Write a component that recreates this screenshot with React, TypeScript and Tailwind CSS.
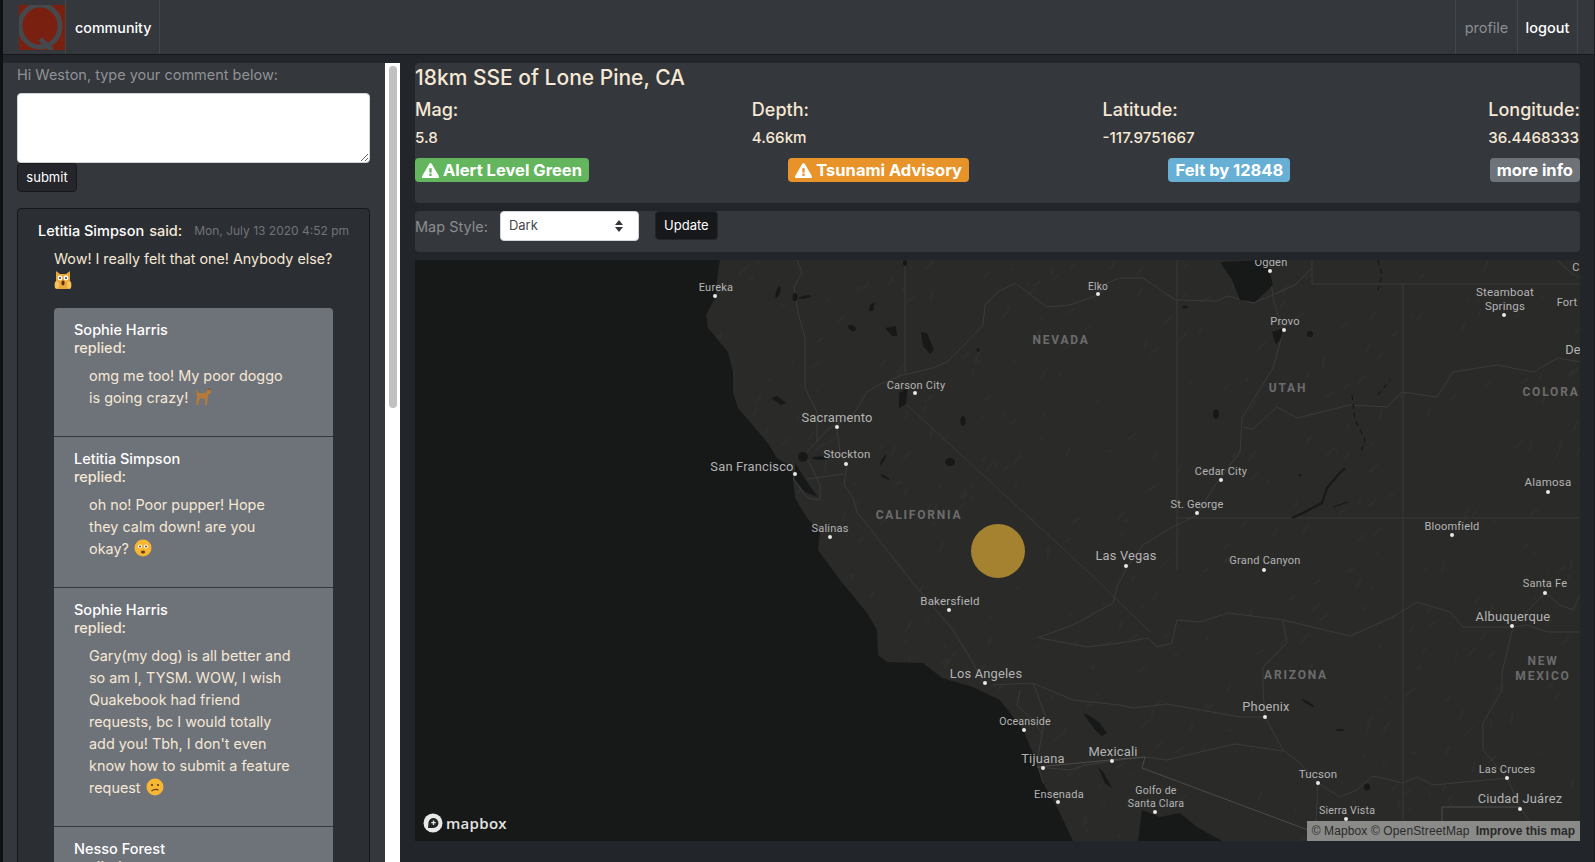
import React from "react";
import { FaExclamationTriangle } from "react-icons/fa";

const coast: [number, number][] = [[720,260],[718,272],[715,298],[706,315],[708,328],[728,352],[733,372],[733,392],[738,408],[767,442],[777,458],[792,468],[795,498],[807,518],[820,532],[818,550],[840,580],[867,613],[877,630],[878,655],[887,662],[923,663],[942,678],[973,687],[1000,700],[1023,730],[1037,763],[1043,783],[1057,807],[1073,841],[415,841],[415,260]];
const gulf = "1138,841 1142,810 1160,817 1180,813 1197,827 1222,841";

const roads = [
  "797,260 802,272 794,287 798,312 805,338 805,388 817,412 817,442",
  "807,452 827,430 853,415 867,392 880,384 903,375 933,368 947,362 967,342 983,325 985,305 998,292 1015,283 1047,307 1070,305 1098,295 1107,283 1120,278 1143,278 1175,300 1217,301 1228,296 1253,303 1273,295",
  "837,430 840,452 847,465 844,485 853,498 857,512 887,550 913,583 953,630 973,663 983,683",
  "793,478 807,498 820,500 820,485 807,458",
  "807,479 844,474",
  "1037,638 1073,625 1113,603 1117,587 1127,567 1143,545 1167,530 1197,515 1213,488 1240,452 1242,418 1273,368 1283,332 1273,298 1270,272",
  "1243,427 1253,429 1277,407 1297,418 1350,405 1387,407 1402,392 1437,397 1453,372 1497,365 1533,372 1558,358 1580,362",
  "1040,638 1087,647 1120,643 1148,638 1157,647 1172,643 1177,620 1200,622 1228,613 1283,620 1350,636 1393,617 1417,602 1450,612 1463,627 1513,627 1527,625 1547,632 1580,632",
  "993,685 1033,683 1073,700 1120,705 1133,708 1167,704 1240,717 1265,717 1283,750 1300,763 1318,783 1340,797 1357,790 1373,776 1403,783 1417,777 1433,785 1507,778 1520,807 1535,830 1560,841",
  "1037,767 1070,770 1085,765 1112,761 1145,757 1167,760 1200,752 1235,744 1283,751",
  "1283,620 1287,643 1263,667 1263,690 1265,717",
  "1513,627 1502,673 1502,690 1483,723 1483,750 1507,778",
  "1512,627 1545,593 1560,605 1573,610 1580,595",
  "1318,783 1315,841",
  "1020,690 1017,705 1033,720 1043,735",
  "1033,683 1045,715 1037,763",
  "1043,783 1037,763",
  "1557,260 1570,272 1580,278",
  "1312,268 1295,285 1273,295",
];
const borders = [
  "905,260 905,373",
  "907,405 1070,555 1100,583 1150,632",
  "1177,260 1177,570",
  "1177,518 1580,518",
  "1403,284 1403,841",
  "1312,260 1312,284 1580,284",
];
const mexico = ["1142,768 1308,830", "1037,767 1120,759 1145,757 1142,768", "1442,841 1442,807 1520,807"];
const lakeShapes = [
  "1220,262 1267,260 1273,285 1255,302 1240,300 1232,280",
  "795,463 807,482 818,497 805,492 795,480",
  "899,393 908,388 906,404 899,408",
  "921,332 927,333 934,350 930,354 923,346",
  "885,328 896,326 897,336 892,336",
  "870,305 875,302 873,311 869,311",
  "1083,713 1090,716 1099,722 1107,733 1102,736 1095,730",
  "1098,767 1103,772 1112,788 1105,783",
  "1272,332 1284,328 1281,338 1276,345",
  "771,398 777,396 786,403 781,405",
];
const ovals: [number, number, number, number, number][] = [
  [852,328,4,2.5,30],[778,292,2,6,20],[795,297,2.5,4,0],[805,297,6,1.5,-10],
  [950,462,5,4,0],[963,421,2.5,5,0],[885,477,5,1.2,30],[883,460,1.2,6,30],[803,457,5,5,0],[820,458,8,1.8,0],[1310,334,3,3,0],[1216,414,3,5,0],
  [1367,787,3,3.5,0],[1308,703,7,1.2,30],[1340,730,4,1,0],[1185,307,3,1.3,0],[905,263,2,3,0],[978,350,1.5,2,0],[1300,475,1.5,1,0],
];
const powell = ["1345,468 1338,475 1327,488 1322,503 1303,513 1292,518", "1333,507 1348,502"];
const dashes = ["1352,395 1355,420 1365,440 1360,455", "1378,260 1382,275 1378,290", "1378,395 1390,380"];

type L = [string, number, number, number?, number?, number?];
const labels: L[] = [
  ["Eureka",716,291,12,715,296],["Elko",1098,290,11,1098,294],["Carson City",916,389,12,915,393],["Sacramento",837,422,14,837,427],
  ["Stockton",847,458,12.5,846,464],["San Francisco",752,471,14,795,474],["Salinas",830,532,12,830,537],["Ogden",1271,266,12,1270,271],
  ["Provo",1285,325,12,1284,330],["Steamboat",1505,296,12.5],["Springs",1505,310,12.5,1504,315],["Cedar City",1221,475,12,1221,480],
  ["St. George",1197,508,12,1197,513],["Alamosa",1548,486,12.5,1548,492],["Bloomfield",1452,530,12,1452,535],["Las Vegas",1126,560,14,1126,566],
  ["Grand Canyon",1265,564,12,1264,570],["Santa Fe",1545,587,12,1545,593],["Albuquerque",1513,621,14,1512,626],["Phoenix",1266,711,14,1265,717],
  ["Mexicali",1113,756,14,1112,761],["Tucson",1318,778,12.5,1318,783],["Golfo de",1156,794,11.5],["Santa Clara",1156,807,11.5,1155,812],
  ["Sierra Vista",1347,814,11.5,1346,819],["Las Cruces",1507,773,12,1507,778],["Ciudad Juárez",1520,803,14,1520,809],["Bakersfield",950,605,12.5,949,610],
  ["Los Angeles",986,678,14,985,683],["Oceanside",1025,725,11.5,1024,730],["Tijuana",1043,763,14,1043,768],["Ensenada",1059,798,12,1058,802],
  ["Fort",1567,306,12],["C",1576,271,12],["De",1573,354,14],
];
const states: [string, number, number][] = [["NEVADA",1061,344],["CALIFORNIA",919,519],["UTAH",1288,392],["COLORA",1551,396],["ARIZONA",1296,679],["NEW",1543,665],["MEXICO",1543,680]];

function patches() {
  let s = 42;
  const r = () => (s = (s * 16807) % 2147483647) / 2147483647;
  return Array.from({ length: 420 }, () => ({
    x: 720 + r() * 860,
    y: 260 + r() * 580,
    l: 2 + r() * 6,
    a: -30 - r() * 50,
  }));
}
const patchData = patches();

function MapSvg() {
  return (
    <svg viewBox="415 260 1165 581" className="block h-full w-full" preserveAspectRatio="none">
      <rect x="415" y="260" width="1165" height="581" fill="#2a2a29" />
      {patchData.map((p, i) => (
        <ellipse key={i} cx={p.x} cy={p.y} rx={p.l} ry={1.5} fill="#2e2e2d" transform={`rotate(${p.a} ${p.x} ${p.y})`} />
      ))}
      <polygon points={coast.map((p) => p.join(",")).join(" ")} fill="#171919" />
      <polygon points={gulf} fill="#171919" />
      {borders.map((p, i) => <polyline key={i} points={p} fill="none" stroke="#393938" strokeWidth="1" />)}
      {roads.map((p, i) => <polyline key={i} points={p} fill="none" stroke="#3b3b3b" strokeWidth="1" strokeLinejoin="round" />)}
      {mexico.map((p, i) => <polyline key={i} points={p} fill="none" stroke="#4c4c4c" strokeWidth="1" />)}
      {lakeShapes.map((p, i) => <polygon key={i} points={p} fill="#171919" />)}
      {ovals.map(([x, y, rx, ry, a], i) => <ellipse key={i} cx={x} cy={y} rx={rx} ry={ry} fill="#171919" transform={`rotate(${a} ${x} ${y})`} />)}
      {powell.map((p, i) => <polyline key={i} points={p} fill="none" stroke="#171919" strokeWidth={i === 0 ? 2 : 1} />)}
      {dashes.map((p, i) => <polyline key={i} points={p} fill="none" stroke="#171919" strokeWidth="1.2" strokeDasharray="5 4" />)}
      <circle cx="998" cy="551" r="27" fill="#a5822f" />
      {labels.map(([t, x, y, size, dx, dy]) => (
        <g key={t + x}>
          <text x={x} y={y} textAnchor="middle" fontSize={(size ?? 12) * 0.92} fill="#b4b4b4" fontFamily="Roboto, sans-serif" letterSpacing="0.2">{t}</text>
          {dx !== undefined && <circle cx={dx} cy={dy} r="2" fill="#e8e8e8" />}
        </g>
      ))}
      {states.map(([t, x, y]) => (
        <text key={t} x={x} y={y} textAnchor="middle" fontSize="12" fontWeight="700" fill="#6c6c6c" fontFamily="Roboto, sans-serif" letterSpacing="1.8">{t}</text>
      ))}
    </svg>
  );
}

const Emoji = ({ kind }: { kind: "cat" | "dog" | "dizzy" | "confused" }) => {
  if (kind === "dog")
    return (
      <svg width="20" height="20" viewBox="0 0 20 20" className="ml-[1px] inline-block align-[-4px]">
        <path d="M3 2 L5 7 L12 8 L15 6 L18 3 L17 1 L14 3 L13 6 L6 6 Z" fill="#8a5a2c" />
        <path d="M14 3 L18 3 L18 6 L15 8 L14 18 L12 18 L12 12 L7 11 L5 18 L3 18 L4 9 L3 2 L6 6 L13 6 Z" fill="#b47a3c" />
      </svg>
    );
  if (kind === "cat")
    return (
      <svg width="18" height="20" viewBox="0 0 18 20" className="block">
        <path d="M2 1 L6 4 L12 4 L16 1 L16 12 L14 19 L4 19 L2 12 Z" fill="#e9a93a" />
        <circle cx="6" cy="8" r="2.4" fill="#fff" /><circle cx="12" cy="8" r="2.4" fill="#fff" />
        <circle cx="6" cy="8" r="1" fill="#333" /><circle cx="12" cy="8" r="1" fill="#333" />
        <ellipse cx="9" cy="13" rx="1.6" ry="2.4" fill="#5a2a12" />
        <ellipse cx="2.8" cy="15" rx="2.2" ry="4" fill="#f4c55c" /><ellipse cx="15.2" cy="15" rx="2.2" ry="4" fill="#f4c55c" />
      </svg>
    );
  return (
    <svg width="18" height="18" viewBox="0 0 18 18" className="ml-[1px] inline-block align-[-3px]">
      <circle cx="9" cy="9" r="8.5" fill="#f7b733" />
      {kind === "dizzy" ? (
        <>
          <circle cx="6" cy="7.5" r="2" fill="#fff" /><circle cx="12" cy="7.5" r="2" fill="#fff" />
          <circle cx="6" cy="7.5" r="0.9" fill="#5a3a12" /><circle cx="12" cy="7.5" r="0.9" fill="#5a3a12" />
          <ellipse cx="9" cy="13" rx="2.2" ry="1.5" fill="#6b3a14" />
        </>
      ) : (
        <>
          <circle cx="6" cy="7" r="1.1" fill="#5a3a12" /><circle cx="12" cy="7" r="1.1" fill="#5a3a12" />
          <path d="M5.5 13 Q9 10.5 12.5 12" stroke="#5a3a12" strokeWidth="1.2" fill="none" />
        </>
      )}
    </svg>
  );
};

const Reply = ({ name, children, first, last }: { name: string; children: React.ReactNode; first?: boolean; last?: boolean }) => (
  <div className={`bg-[#6e7279] px-[20px] pt-[13px] pb-[27px] ${first ? "rounded-t-[4px]" : ""} ${last ? "" : "border-b border-[#34373c]"}`}>
    <div className="text-[14.5px] leading-[18px] font-medium text-white">{name}</div>
    <div className="text-[14.5px] leading-[18px] font-medium text-[#f5e8d5]">replied:</div>
    <p className="mt-[8px] pl-[15px] text-[14.4px] leading-[22px] text-[#f5e8d5]">{children}</p>
  </div>
);

const Badge = ({ className, children }: { className: string; children: React.ReactNode }) => (
  <span className={`flex h-[24px] items-center gap-[4px] rounded-[4px] px-[7px] text-[16.5px] leading-none font-bold text-white ${className}`}>{children}</span>
);

const Stat = ({ label, value }: { label: string; value: string }) => (
  <div className="flex flex-col">
    <span className="text-[18px] leading-[24px] font-medium">{label}</span>
    <span className="mt-[5px] text-[15.2px] leading-[22px] font-medium">{value}</span>
  </div>
);

export default function App() {
  return (
    <div className="flex h-screen w-full flex-col overflow-hidden border-r border-l-[3px] border-r-[#1a1c1f] border-l-[#0f1012] bg-[#22252a] font-['Inter',sans-serif] text-[#f5e8d5]">
      <nav className="flex h-[55px] shrink-0 items-stretch border-b border-[#17181b] bg-[#34373c] pl-[16px]">
        <div className="flex w-[47px] items-center border-r border-[#44474c]">
          <svg width="46" height="45" viewBox="0 0 46 45" className="block">
            <rect width="46" height="45" fill="#7a2010" />
            <ellipse cx="21" cy="21" rx="20" ry="21" fill="none" stroke="#45484c" strokeWidth="5" />
            <line x1="21" y1="34" x2="33" y2="45" stroke="#45484c" strokeWidth="5" />
          </svg>
        </div>
        <div className="flex w-[94px] items-center border-r border-[#44474c] pt-[2px] pl-[9px] text-[14.3px] font-medium text-white">community</div>
        <div className="ml-auto flex items-stretch border-l border-[#44474c]">
          <div className="flex w-[62px] items-center justify-center border-r border-[#44474c] pt-[2px] text-[14.5px] text-[#8b8d90]">profile</div>
          <div className="flex w-[60px] items-center justify-center border-r border-[#44474c] pt-[2px] text-[14.5px] font-medium text-white">logout</div>
          <div className="w-[16px]" />
        </div>
      </nav>

      <main className="flex min-h-0 flex-1 pt-[8px]">
        <aside className="w-[382px] shrink-0 overflow-hidden bg-[#34373c] pr-[15px] pl-[14px]">
          <div className="text-[14.5px] leading-[24px] text-[#909295]">Hi Weston, type your comment below:</div>
          <textarea aria-label="comment" className="mt-[6px] block h-[70px] w-full rounded-[4px] border border-[#ced4da] bg-white" />
          <button className="block h-[29px] w-[60px] rounded-[4px] border border-[#17181b] bg-[#24262b] text-[13px] text-white">submit</button>
          <section className="mt-[16px] rounded-[4px] border border-[#17181b] bg-[#2b2e33] px-[36px] pt-[10px]">
            <div className="-ml-[16px] flex items-center text-[14.5px] leading-[24px] font-medium whitespace-nowrap">
              <span className="text-white">Letitia Simpson</span>
              <span className="ml-[5px]">said:</span>
              <span className="ml-[12px] text-[12px] font-normal text-[#71747a]">Mon, July 13 2020 4:52 pm</span>
            </div>
            <div className="mt-[5px] text-[14.3px] leading-[22px]">
              <div className="whitespace-nowrap">Wow! I really felt that one! Anybody else?</div>
              <Emoji kind="cat" />
            </div>
            <div className="mt-[18px]">
              <Reply name="Sophie Harris" first>omg me too! My poor doggo<br />is going crazy! <Emoji kind="dog" /></Reply>
              <Reply name="Letitia Simpson">oh no! Poor pupper! Hope<br />they calm down! are you<br />okay? <Emoji kind="dizzy" /></Reply>
              <Reply name="Sophie Harris">Gary(my dog) is all better and<br />so am I, TYSM. WOW, I wish<br />Quakebook had friend<br />requests, bc I would totally<br />add you! Tbh, I don't even<br />know how to submit a feature<br />request <Emoji kind="confused" /></Reply>
              <Reply name="Nesso Forest" last>Same here!</Reply>
            </div>
          </section>
        </aside>
        <div className="w-[15px] shrink-0 bg-white pt-[3px] pl-[4px]">
          <div className="h-[342px] w-[8px] rounded-[4px] bg-[#c0c0c0]" />
        </div>

        <div className="flex min-w-0 flex-1 flex-col gap-[8px] pr-[14px] pb-[21px] pl-[15px]">
          <section className="h-[140px] shrink-0 rounded-[4px] bg-[#34373c]">
            <h1 className="h-[29px] text-[21px] leading-[30px] font-medium">18km SSE of Lone Pine, CA</h1>
            <div className="flex justify-between pt-[6px]">
              <Stat label="Mag:" value="5.8" />
              <Stat label="Depth:" value="4.66km" />
              <Stat label="Latitude:" value="-117.9751667" />
              <Stat label="Longitude:" value="36.4468333" />
            </div>
            <div className="mt-[9px] flex justify-between">
              <Badge className="bg-[#63b65d]"><FaExclamationTriangle size={17} />Alert Level Green</Badge>
              <Badge className="bg-[#e89329]"><FaExclamationTriangle size={17} />Tsunami Advisory</Badge>
              <Badge className="bg-[#67afd5]">Felt by 12848</Badge>
              <Badge className="bg-[#6e7279]">more info</Badge>
            </div>
          </section>

          <section className="flex h-[41px] shrink-0 items-start rounded-[4px] bg-[#34373c]">
            <span className="mt-[5px] text-[14.5px] leading-[22px] text-[#8b8d90]">Map Style:</span>
            <div className="ml-[12px] flex h-[30px] w-[139px] items-center justify-between rounded-[4px] border border-[#ced4da] bg-white pr-[15px] pl-[8px] text-[13px] text-[#44474c]">
              Dark
              <svg width="8" height="12" viewBox="0 0 8 12"><path d="M4 0 L8 5 L0 5 Z M4 12 L8 7 L0 7 Z" fill="#34373c" /></svg>
            </div>
            <button className="ml-[16px] h-[29px] w-[63px] rounded-[4px] border border-[#22252a] bg-[#17181b] text-[13px] text-white">Update</button>
          </section>

          <section className="relative min-h-0 flex-1 overflow-hidden">
            <MapSvg />
            <div className="absolute bottom-[8px] left-[8px] flex items-center gap-[3px]">
              <svg width="20" height="20" viewBox="0 0 20 20">
                <circle cx="10" cy="10" r="9.5" fill="#e8e8e8" />
                <path d="M5 15 L5.5 9.5 A5 5 0 1 1 10.5 15 Z" fill="#222424" />
                <path d="M10.5 7.5 V12 M8.3 9.7 H12.7" stroke="#e8e8e8" strokeWidth="1.3" />
              </svg>
              <span className="font-['Open_Sans',sans-serif] text-[15px] leading-[20px] font-semibold tracking-[0.3px] text-[#e4e4e4]">mapbox</span>
            </div>
            <div className="absolute right-0 bottom-0 flex h-[20px] items-center gap-[6px] bg-[#8a8a89] px-[5px] font-['Liberation_Sans',sans-serif] text-[12px] text-[#2a2a2a]">
              <span className="tracking-[0.12px]">© Mapbox © OpenStreetMap</span>
              <span className="font-bold">Improve this map</span>
            </div>
          </section>
        </div>
      </main>
    </div>
  );
}
